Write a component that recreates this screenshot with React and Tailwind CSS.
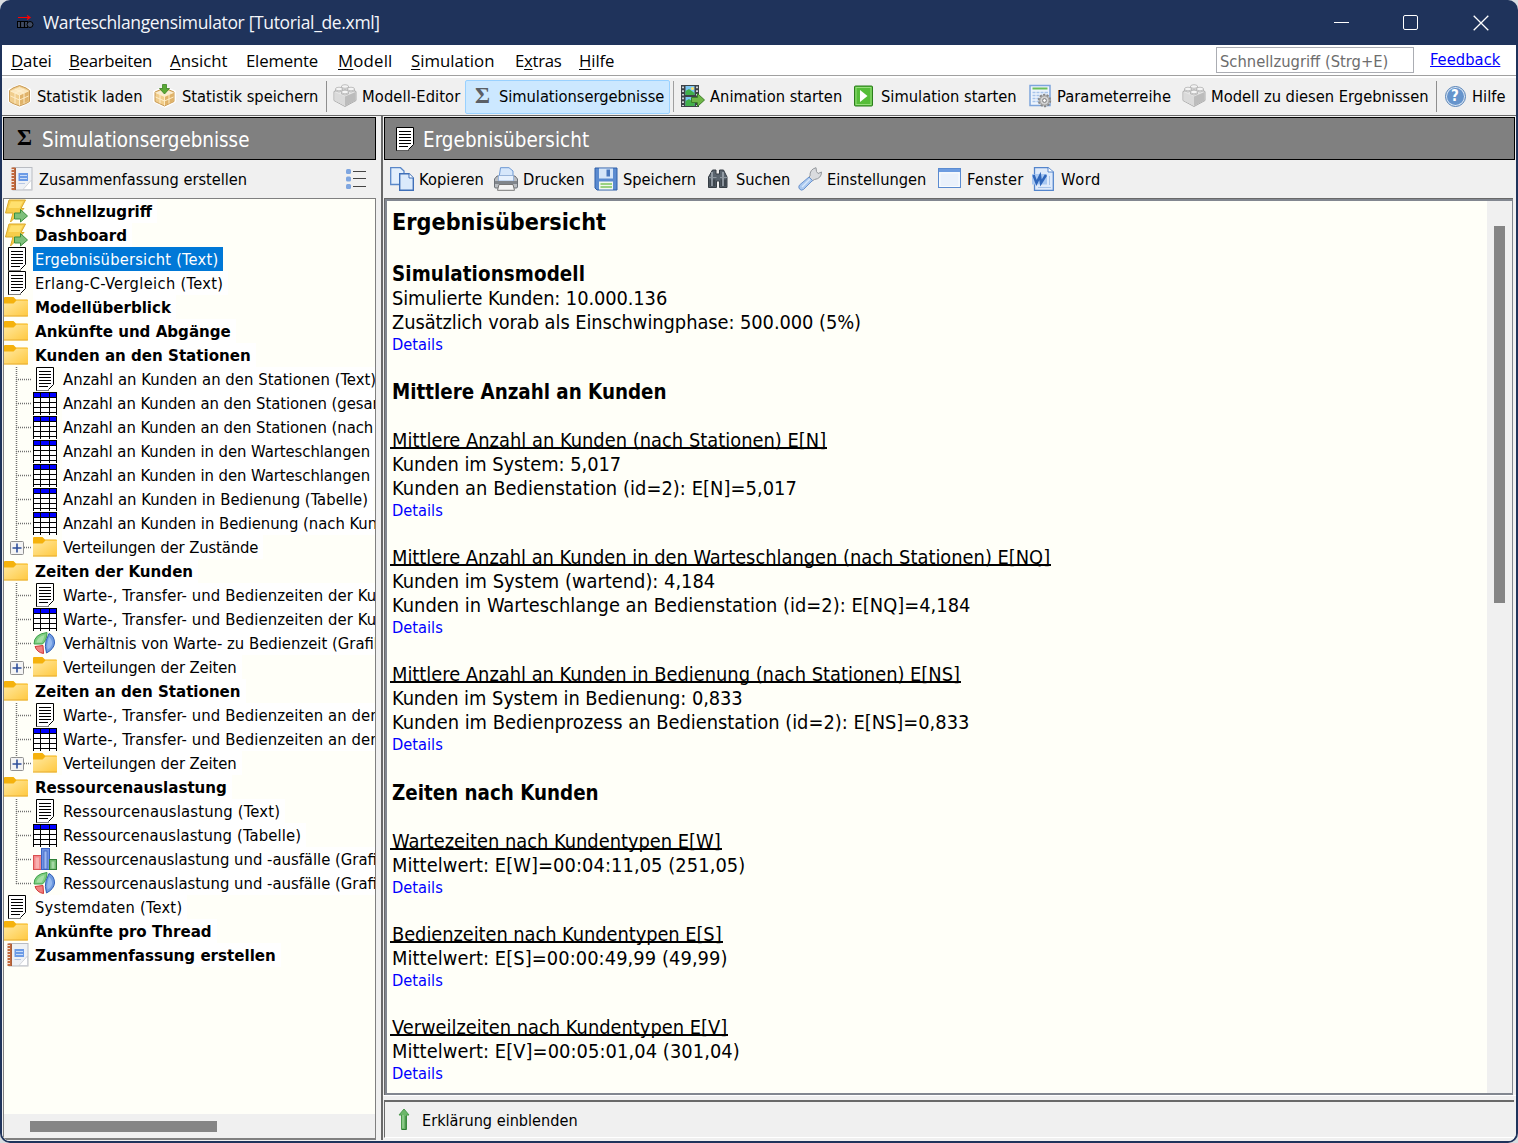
import React from "react";

/* ---------- icons ---------- */

const Svg = ({ children, w = 24, h = 24, className = "" }) => (
  <svg width={w} height={h} viewBox={`0 0 ${w} ${h}`} className={`shrink-0 ${className}`}>
    {children}
  </svg>
);

const DocIcon = ({ className }) => (
  <Svg w={18} h={24} className={className}>
    <path d="M0.5 23V0.5H17.5V17.5L12 23.5H0.5Z" fill="#fff" />
    <path d="M0.5 23.5V0.5H17.5V17.5L12.5 22.5" fill="none" stroke="#000" />
    <path d="M3 4.5H15M3 7.5H15M3 10.5H15M3 13.5H15M3 16.5H15M3 19.5H12" stroke="#000" />
    <path d="M0 23.5H13" stroke="#000" strokeOpacity="0.5" />
  </Svg>
);

const TableIcon = () => (
  <Svg>
    <rect x="0" y="1" width="24" height="23" fill="#fff" />
    <rect x="0" y="1" width="24" height="5" fill="#0000ff" />
    <path d="M0 1.5H24M0 6.5H24M0 11.5H24M0 16.5H24M0 21.5H24M0.5 1V24M7.5 1V24M16.5 1V24M23.5 1V24" stroke="#000" />
  </Svg>
);

const FolderIcon = () => (
  <Svg>
    <defs>
      <linearGradient id="folder" x1="0" y1="0" x2="1" y2="1">
        <stop offset="0" stopColor="#ffe9a2" />
        <stop offset="1" stopColor="#ffc83d" />
      </linearGradient>
    </defs>
    <path d="M0 3Q0 2 1 2H9.5L12 4.5H23Q24 4.5 24 5.5V9H0Z" fill="#f5b20d" />
    <path d="M0 8.5H9.5L12.5 5.5H24V20.5Q24 21.5 23 21.5H0Z" fill="url(#folder)" />
    <path d="M0 21H24" stroke="#e0a52a" strokeWidth="0.8" />
  </Svg>
);

const BoltIcon = () => (
  <Svg>
    <path d="M5 1H21.5L17 9.5H20L6.5 23L9 14H1.5Z" fill="#f7cd4a" stroke="#dba92a" />
    <path d="M7 2.5H19L15.5 9H4.5Z" fill="#ffe06e" />
    <path d="M10.5 14H16.5V10.5L23.5 17L16.5 23V20H10.5Z" fill="#7fc07a" stroke="#3c8f3c" />
  </Svg>
);

const PieIcon = () => (
  <Svg>
    <path d="M1 13Q1 3 14 1.5Q14 9 9.5 13Z" fill="#7fce80" stroke="#3d9f4a" />
    <path d="M3.5 11.5Q4 6 11.5 4Q11 8 8.5 11.5Z" fill="#a5dfa5" />
    <path d="M16 2.5Q21.5 5 21.5 12Q21 18 13.5 22Q11.500 15 13 10Z" fill="#6f9be0" stroke="#2f5fb8" />
    <path d="M16 6Q19.5 9 19 13Q18 17 14.5 18.5Q13.5 14 15 10Z" fill="#95b9ee" />
    <path d="M2 15.5L10 14.5L10.500 22.5Q4 21.5 2 15.5Z" fill="#f08080" stroke="#cf3535" />
  </Svg>
);

const BarsIcon = () => (
  <Svg>
    <rect x="0.5" y="8.5" width="8" height="14" fill="#f4888a" stroke="#d85050" />
    <rect x="2.5" y="10.5" width="3.5" height="11" fill="#f8b0b0" />
    <rect x="8.5" y="1.5" width="8" height="21" fill="#6f92e4" stroke="#3a62c4" />
    <rect x="11" y="4" width="3" height="18" fill="#9db8f2" stroke="#2f55b5" strokeWidth="0.6" />
    <rect x="16.5" y="12.5" width="7" height="10" fill="#6fb96f" stroke="#2f7f35" />
    <rect x="18.5" y="14.5" width="3" height="7" fill="#a5d9a5" />
  </Svg>
);

const NotebookIcon = ({ className }) => (
  <Svg className={className}>
    <rect x="3" y="0.5" width="19" height="22.5" fill="#eef1f5" stroke="#b9bcc2" />
    <path d="M21.500 13L13 22.5H21.500Z" fill="#fff" stroke="#c3c6cc" strokeWidth="0.7" />
    <rect x="1.5" y="0.5" width="4" height="22.5" fill="#c2693c" />
    <path d="M0.500 2.5H4M0.500 5.500H4M0.500 8.500H4M0.500 11.500H4M0.500 14.500H4M0.500 17.500H4M0.500 20.500H4" stroke="#f0e2da" strokeWidth="1.100" />
    <path d="M5.500 1V23" stroke="#9c4a22" strokeWidth="0.800" />
    <rect x="8.5" y="6" width="9.500" height="8" fill="#6c9be6" />
    <path d="M10 8.500H17M10 11.500H17" stroke="#c9dcf8" />
    <path d="M8.5 16.500H15" stroke="#b5c6e4" />
  </Svg>
);

const BrickIcon = () => (
  <Svg>
    <path d="M1 7.500L12 2.500L23 7.500V16.500L12 22.500L1 16.500Z" fill="#e6e6e6" stroke="#aaa" />
    <path d="M1.500 8L12 12.500V22L1.500 16.500Z" fill="#dadada" />
    <path d="M22.500 8L12 12.500V22L22.500 16.500Z" fill="#bcbcbc" />
    <g fill="#f4f4f4" stroke="#a9a9a9" strokeWidth="0.7">
      <path d="M8.500 2.500V4.500Q12 6.500 15.500 4.500V2.500Z" />
      <ellipse cx="12" cy="2.500" rx="3.500" ry="1.800" />
      <path d="M2.500 5V7Q6 9 9.500 7V5Z" />
      <ellipse cx="6" cy="5" rx="3.500" ry="1.800" />
      <path d="M14.500 5V7Q18 9 21.500 7V5Z" />
      <ellipse cx="18" cy="5" rx="3.500" ry="1.800" />
      <path d="M8.500 8V10Q12 12 15.500 10V8Z" />
      <ellipse cx="12" cy="8" rx="3.500" ry="1.800" />
    </g>
  </Svg>
);

const CubeBase = () => (
  <>
    <path d="M0 5L12 0L23 5V18L12 24L0 18Z" fill="#fff" />
    <path d="M1.500 6.500L5 4L11.500 1.500L18 4L21.500 6.500V17.500L18 19.500L11.500 22L5 19.500L1.500 17.500Z" fill="#f0cd8c" stroke="#c89a55" />
    <path d="M2.500 7L11.500 3L20.500 7L11.500 11Z" fill="#fbe8c0" />
    <path d="M11.500 11V21L20.500 17V7Z" fill="#e0b36a" />
    <path d="M2.500 7L11.500 11L20.500 7M11.500 11V21.500M7 5L16 9V19.500M16 5L7 9V19.500M2.500 12L11.500 16L20.500 12" fill="none" stroke="#fff0cf" strokeWidth="0.9" />
  </>
);

const CubeIcon = () => (
  <Svg>
    <CubeBase />
  </Svg>
);

const CubeSaveIcon = () => (
  <Svg>
    <path d="M0 7L12 2L23 7V18L12 24L0 18Z" fill="#fff" />
    <path d="M2 8L11.500 4L21 8V17.500L11.500 22L2 17.500Z" fill="#f0cd8c" stroke="#c89a55" />
    <path d="M3 8.500L11.500 5L20 8.500L11.500 12.500Z" fill="#f8ecd2" />
    <path d="M11.500 12.500V21.500L20.500 17.500V8.500Z" fill="#e0b36a" />
    <path d="M2.500 8.500L11.500 12.500L20.500 8.500M11.500 12.500V21.500M7 10.500V19.500M16 10.500V19.500M2.500 13L11.500 17L20.500 13" fill="none" stroke="#fff0cf" strokeWidth="0.9" />
    <path d="M9.500 0.500H13.500V4.500H16.500L11.500 10L6.500 4.500H9.500Z" fill="#5aa935" stroke="#3b8222" strokeWidth="0.8" />
  </Svg>
);

const FilmIcon = () => (
  <Svg>
    <rect x="0" y="1" width="18" height="22" fill="#3d4247" />
    <path d="M2 2.500V22M16 2.500V22" stroke="#e2e6ea" strokeWidth="1.800" strokeDasharray="1.700 2" />
    <rect x="4.500" y="2" width="9" height="9" fill="#7cc7f2" />
    <path d="M4.500 11V7L8 5L13.500 9V11Z" fill="#41b04a" />
    <circle cx="11.500" cy="4.500" r="1.500" fill="#ffe36b" />
    <rect x="4.500" y="13" width="9" height="9" fill="#7cc7f2" />
    <path d="M4.500 22V17L8 15L13.500 19V22Z" fill="#41b04a" />
    <path d="M10.500 13.500H16.500V9.500L23.500 16L16.500 22.500V18.500H10.500Z" fill="#6fb648" stroke="#3b7f27" />
  </Svg>
);

const PlayIcon = () => (
  <Svg>
    <rect x="2.500" y="2" width="18" height="20" rx="1" fill="#55bd38" stroke="#2b7d1c" />
    <rect x="4" y="3.500" width="15" height="17" fill="none" stroke="#96de7c" />
    <path d="M8 6V18L15.500 12Z" fill="#fff" />
  </Svg>
);

const ParamIcon = () => (
  <Svg>
    <rect x="2" y="1.500" width="20" height="20" fill="#eef4fc" stroke="#7da5dc" strokeWidth="1.500" />
    <rect x="4.500" y="3.500" width="15" height="2" fill="#6bbf59" />
    <path d="M4.500 8.500H20M4.500 11.500H20M4.500 14.500H14M4.500 17.500H12" stroke="#a8c4ea" strokeWidth="1.500" />
    <path d="M8 7V19M12 7V19M16 7V12" stroke="#eef4fc" />
    <circle cx="16.500" cy="16.500" r="5.800" fill="#c9c9c9" stroke="#888" strokeDasharray="2.200 1.400" strokeWidth="1.800" />
    <circle cx="16.500" cy="16.500" r="4.600" fill="#d2d2d2" stroke="#888" strokeWidth="0.700" />
    <circle cx="16.500" cy="16.500" r="1.900" fill="#fff" stroke="#777" />
  </Svg>
);

const HelpIcon = () => (
  <div className="flex size-6 shrink-0 items-center justify-center">
    <div className="flex size-[21px] items-center justify-center rounded-full border border-[#5682b6] bg-[#d5e3f4]">
      <div className="flex size-[17px] items-center justify-center rounded-full bg-[#6694cc] text-[15px] leading-none font-bold text-white">?</div>
    </div>
  </div>
);

const CopyIcon = () => (
  <Svg>
    <path d="M0.700 0.700H10.500L14 4V17.500H0.700Z" fill="#e3effc" stroke="#5a87c8" strokeWidth="1.300" />
    <path d="M9.700 6.700H19L23.300 11V23.300H9.700Z" fill="#dbeafb" stroke="#3f6fb8" strokeWidth="1.400" />
    <path d="M19 6.700V11H23.300" fill="#fff" stroke="#3f6fb8" />
  </Svg>
);

const PrinterIcon = () => (
  <Svg>
    <path d="M5 11L6.500 0.700H15L19 4V11Z" fill="#d6e7fb" stroke="#6b97d3" />
    <path d="M3 9H21L23.500 12V20Q23.500 21 22 21H2Q0.500 21 0.500 20V12Z" fill="#b9bdc2" stroke="#6d7278" />
    <path d="M4.500 8.500H19.500V14H4.500Z" fill="#e7f1fd" stroke="#85a8d8" strokeWidth="0.700" />
    <rect x="1" y="14" width="22" height="3" fill="#80858b" />
    <path d="M5 17.500H19L20.500 23.300H3.500Z" fill="#f4f4f4" stroke="#777" />
  </Svg>
);

const SaveIcon = () => (
  <Svg>
    <path d="M1 1H23V23H3L1 21Z" fill="#5b8bd0" stroke="#2f5fa8" />
    <rect x="5" y="1.500" width="14" height="10" fill="#d5e5f8" />
    <rect x="12.500" y="2.500" width="3.500" height="7" fill="#4a78bd" />
    <rect x="5" y="14.500" width="14" height="8" fill="#f1f8ee" />
    <path d="M6.500 17H18M6.500 20H18" stroke="#7cc35f" strokeWidth="1.500" />
  </Svg>
);

const BinocularsIcon = () => (
  <Svg>
    <path d="M5.500 3H9V7H12.500V3H16.500L20 10V20.500H12.500V14H9.500V20.500H1.500V10Z" fill="#5a646e" stroke="#363d44" />
    <rect x="2.500" y="12.500" width="6" height="7" fill="#3e464e" />
    <rect x="13.500" y="12.500" width="6" height="7" fill="#3e464e" />
    <path d="M5 5V19M16 5V19" stroke="#a4adb6" strokeWidth="1.500" />
    <path d="M2 10.500H9.500M13 10.500H20" stroke="#8d969e" />
  </Svg>
);

const WrenchIcon = () => (
  <Svg>
    <path d="M12 9Q11.500 2.500 18 0.700L18.500 4.500L20 6.500L23.500 5Q23.500 11.500 16.500 12.500L14 14L10.500 10.500Z" fill="#d9dbde" stroke="#92969b" />
    <path d="M11 10L14.500 13.500L5.500 22.500Q3 24 1.500 22Q0 20 1.500 18Z" fill="#a9c8f0" stroke="#6c93cc" />
    <path d="M4 20L12 12" stroke="#d8e7fa" strokeWidth="1.500" />
  </Svg>
);

const WindowIcon = () => (
  <Svg>
    <rect x="0.500" y="1.500" width="22" height="19" fill="#eef4fc" stroke="#5b8bd0" />
    <rect x="1" y="2" width="21" height="3" fill="#6d9ce0" />
    <rect x="2" y="6" width="19" height="13.500" fill="#eaf1fb" stroke="#fff" strokeWidth="0.700" />
  </Svg>
);

const WordIcon = () => (
  <Svg>
    <path d="M2.500 0.700H16L21.300 5V23.300H2.500Z" fill="#dfeafa" stroke="#5485cc" strokeWidth="1.300" />
    <path d="M16 0.700V5H21.300" fill="#fff" stroke="#5485cc" />
    <rect x="0" y="7" width="15" height="10.500" fill="#a9c8f2" />
    <path d="M1.500 8L4.500 16L8 9L9 16L14 8" fill="none" stroke="#2f66bb" strokeWidth="2.500" />
    <path d="M6 20.500H19M17.500 9V18" stroke="#a9c4ea" />
  </Svg>
);

const ListIcon = () => (
  <Svg w={20} h={20}>
    <g fill="#7fa6e0">
      <rect x="0" y="0" width="5" height="5" rx="1.500" />
      <rect x="0" y="7.500" width="5" height="5" rx="1.500" />
      <rect x="0" y="15" width="5" height="5" rx="1.500" />
    </g>
    <path d="M7 2.500H20M7 9.500H20M7 17.500H20" stroke="#444" strokeWidth="1.200" />
  </Svg>
);

const UpIcon = () => (
  <Svg w={12} h={23}>
    <path d="M6 1L11 7H8.500V21.500H3.500V7H1Z" fill="#6cb66a" stroke="#4a994c" />
    <path d="M5 7V20" stroke="#a7d9a3" />
    <path d="M8 8V21.500H4" fill="none" stroke="#2e7a34" />
  </Svg>
);

const AppIcon = () => (
  <Svg w={17} h={16}>
    <path d="M1 2.500H13M10 0.500L13 2.500L10 4.500" fill="none" stroke="#f00" strokeWidth="1.200" />
    <rect x="0.500" y="6.500" width="10" height="6" fill="#3f4b63" stroke="#000" />
    <path d="M3.500 6V13M7.500 6V13" stroke="#000" strokeWidth="1.200" />
    <circle cx="13" cy="9.500" r="3" fill="#3f4b63" stroke="#000" />
  </Svg>
);

/* ---------- toolbars ---------- */

const Tool = ({ icon, label, className = "" }) => (
  <div className={`flex shrink-0 items-center gap-[5px] whitespace-nowrap ${className}`}>
    {icon}
    <span className="pt-[2px]">{label}</span>
  </div>
);

const MainToolbar = () => (
  <div className="flex h-[37px] shrink-0 items-center bg-[#f0f0f0] pl-1.5 text-[16.35px]">
    <Tool icon={<CubeIcon />} label="Statistik laden" className="w-[145px]" />
    <Tool icon={<CubeSaveIcon />} label="Statistik speichern" className="w-[173px]" />
    <div className="h-[31px] w-[7px] shrink-0 border-l border-[#8e8e8e]" />
    <Tool icon={<BrickIcon />} label="Modell-Editor" className="w-[132px] tracking-[0.1px]" />
    <div className="flex h-[34px] w-[205px] shrink-0 items-center rounded-xs border border-[#99d1ff] bg-[#cce8ff] pl-1">
      <span className="w-[29px] pb-[2px] pl-[5px] font-['Liberation_Serif'] text-[23px] leading-none font-bold text-[#5b5f65]">Σ</span>
      <span className="pt-[2px] tracking-[-0.05px] whitespace-nowrap">Simulationsergebnisse</span>
    </div>
    <div className="ml-[3px] h-[31px] w-[8px] shrink-0 border-l border-[#a0a0a0]" />
    <Tool icon={<FilmIcon />} label="Animation starten" className="w-[171px]" />
    <Tool icon={<PlayIcon />} label="Simulation starten" className="w-[176px]" />
    <Tool icon={<ParamIcon />} label="Parameterreihe" className="w-[154px] tracking-[0.05px]" />
    <Tool icon={<BrickIcon />} label="Modell zu diesen Ergebnissen" className="w-[254px]" />
    <div className="h-[31px] w-[7px] shrink-0 border-l border-[#8e8e8e]" />
    <Tool icon={<HelpIcon />} label="Hilfe" />
  </div>
);

const MenuItem = ({ pre = "", hot = "", rest, className }) => (
  <div className={`shrink-0 pt-[2px] ${className}`}>
    {pre}
    <span className="underline decoration-1 underline-offset-2">{hot}</span>
    {rest}
  </div>
);

const MenuBar = () => (
  <div className="flex h-[31px] shrink-0 items-center border-b border-[#a0a0a0] bg-white pl-[9px] font-['Open_Sans'] text-[16.8px] tracking-[-0.1px]">
    <MenuItem hot="D" rest="atei" className="w-[58px]" />
    <MenuItem hot="B" rest="earbeiten" className="w-[101px] tracking-[-0.3px]" />
    <MenuItem hot="A" rest="nsicht" className="w-[76px] tracking-[0px]" />
    <MenuItem rest="Elemente" className="w-[92px] tracking-[-0.2px]" />
    <MenuItem hot="M" rest="odell" className="w-[73px] tracking-[0.2px]" />
    <MenuItem hot="S" rest="imulation" className="w-[104px] tracking-[0px]" />
    <MenuItem pre="E" hot="x" rest="tras" className="w-[64px] tracking-[-0.3px]" />
    <MenuItem hot="H" rest="ilfe" className="w-[60px]" />
    <div className="mr-4 ml-auto flex h-[26px] w-[198px] items-center border border-[#abadb3] pt-[4px] pl-[3px] font-['DejaVu_Sans_Condensed'] text-[16.4px] tracking-normal text-[#6d6d6d]">
      Schnellzugriff (Strg+E)
    </div>
    <div className="mr-4 w-[70px] font-['DejaVu_Sans_Condensed'] text-[16.35px] tracking-[0.05px] text-[#0000ff] underline decoration-1 underline-offset-1">
      Feedback
    </div>
  </div>
);

const TitleBar = () => (
  <div className="flex h-[45px] shrink-0 items-center pl-[15px] font-['Open_Sans'] text-[17.5px] tracking-[-0.34px] text-[#f4f6fa]">
    <AppIcon />
    <span className="ml-[9px] whitespace-nowrap">Warteschlangensimulator [Tutorial_de.xml]</span>
    <div className="mr-[27px] ml-auto flex items-center">
      <div className="h-px w-[15px] bg-white" />
      <div className="ml-[54px] size-[15px] rounded-[2px] border-[1.5px] border-white" />
      <svg width="16" height="16" viewBox="0 0 16 16" className="ml-[55px]">
        <path d="M0.700 0.700L15.300 15.300M15.300 0.700L0.700 15.300" stroke="#fff" strokeWidth="1.300" />
      </svg>
    </div>
  </div>
);

/* ---------- tree ---------- */

const ICONS = { folder: FolderIcon, bolt: BoltIcon, table: TableIcon, pie: PieIcon, bars: BarsIcon };

const TREE = [
  { icon: "bolt", text: "Schnellzugriff", bold: true },
  { icon: "bolt", text: "Dashboard", bold: true },
  { icon: "doc", text: "Ergebnisübersicht (Text)", selected: true, track: "tracking-[0.25px]" },
  { icon: "doc", text: "Erlang-C-Vergleich (Text)", track: "tracking-[0.36px]" },
  { icon: "folder", text: "Modellüberblick", bold: true },
  { icon: "folder", text: "Ankünfte und Abgänge", bold: true },
  { icon: "folder", text: "Kunden an den Stationen", bold: true },
  { sub: true, icon: "doc", text: "Anzahl an Kunden an den Stationen (Text)", track: "tracking-[0.04px]" },
  { sub: true, icon: "table", text: "Anzahl an Kunden an den Stationen (gesamt)", track: "tracking-[-0.05px]" },
  { sub: true, icon: "table", text: "Anzahl an Kunden an den Stationen (nach Kundentypen)", track: "tracking-[-0.05px]" },
  { sub: true, icon: "table", text: "Anzahl an Kunden in den Warteschlangen (Tabelle)", track: "tracking-[-0.05px]" },
  { sub: true, icon: "table", text: "Anzahl an Kunden in den Warteschlangen (nach Kundentypen)", track: "tracking-[-0.05px]" },
  { sub: true, icon: "table", text: "Anzahl an Kunden in Bedienung (Tabelle)", track: "tracking-[0.03px]" },
  { sub: true, icon: "table", text: "Anzahl an Kunden in Bedienung (nach Kundentypen)", track: "tracking-[-0.03px]" },
  { sub: true, plus: true, last: true, icon: "folder", text: "Verteilungen der Zustände", track: "tracking-[-0.12px]" },
  { icon: "folder", text: "Zeiten der Kunden", bold: true },
  { sub: true, icon: "doc", text: "Warte-, Transfer- und Bedienzeiten der Kunden (Text)", track: "tracking-[0.1px]" },
  { sub: true, icon: "table", text: "Warte-, Transfer- und Bedienzeiten der Kunden (Tabelle)", track: "tracking-[0.1px]" },
  { sub: true, icon: "pie", text: "Verhältnis von Warte- zu Bedienzeit (Grafik)" },
  { sub: true, plus: true, last: true, icon: "folder", text: "Verteilungen der Zeiten", track: "tracking-[-0.1px]" },
  { icon: "folder", text: "Zeiten an den Stationen", bold: true },
  { sub: true, icon: "doc", text: "Warte-, Transfer- und Bedienzeiten an den Stationen (Text)", track: "tracking-[0.1px]" },
  { sub: true, icon: "table", text: "Warte-, Transfer- und Bedienzeiten an den Stationen (Tabelle)", track: "tracking-[0.1px]" },
  { sub: true, plus: true, last: true, icon: "folder", text: "Verteilungen der Zeiten", track: "tracking-[-0.1px]" },
  { icon: "folder", text: "Ressourcenauslastung", bold: true },
  { sub: true, icon: "doc", text: "Ressourcenauslastung (Text)", track: "tracking-[0.18px]" },
  { sub: true, icon: "table", text: "Ressourcenauslastung (Tabelle)", track: "tracking-[0.14px]" },
  { sub: true, icon: "bars", text: "Ressourcenauslastung und -ausfälle (Grafik)" },
  { sub: true, last: true, icon: "pie", text: "Ressourcenauslastung und -ausfälle (Grafik)" },
  { icon: "doc", text: "Systemdaten (Text)", track: "tracking-[0.28px]" },
  { icon: "folder", text: "Ankünfte pro Thread", bold: true },
  { icon: "book", text: "Zusammenfassung erstellen", bold: true },
];

const Branch = ({ plus, last }) => (
  <svg width="29" height="24" viewBox="0 0 29 24" className="shrink-0">
    <path d={last ? "M12.500 0V13" : "M12.500 0V24"} stroke="#707070" strokeWidth="1.500" strokeDasharray="1 1" />
    <path d="M12 12.500H27" stroke="#707070" strokeWidth="1.500" strokeDasharray="1 1" />
    {plus && (
      <>
        <rect x="6.500" y="6.500" width="13" height="13" rx="1" fill="#f4f4f4" stroke="#919191" />
        <path d="M8.500 13H17.500M13 8.500V17.500" stroke="#2f4f9b" strokeWidth="1.600" />
      </>
    )}
  </svg>
);

const RowIcon = ({ icon, sub }) => {
  if (icon === "doc") return <DocIcon className={sub ? "ml-[3px]" : "ml-1"} />;
  if (icon === "book") return <NotebookIcon className="ml-[2px]" />;
  const Icon = ICONS[icon];
  return <Icon />;
};

const TreeRow = ({ icon, text, bold, selected, sub, plus, last, track = "" }) => (
  <div className="flex h-6 shrink-0 items-center">
    {sub && <Branch plus={plus} last={last} />}
    <div className="w-[29px] shrink-0">
      <RowIcon icon={icon} sub={sub} />
    </div>
    <span
      className={`h-6 shrink-0 pr-[5px] leading-[26px] whitespace-pre ${sub ? "pl-px" : "pl-[2px]"} ${track} ${
        selected ? "bg-[#0078d7] text-white" : "bg-white"
      } ${
        bold
          ? "font-['DejaVu_Sans'] text-[15.08px] font-bold"
          : sub
            ? "text-[16.5px]"
            : "text-[16.3px]"
      }`}
    >
      {text}
    </span>
  </div>
);

const LeftPanel = () => (
  <div className="mt-px ml-px flex w-[373px] shrink-0 flex-col">
    <div className="flex h-[43px] shrink-0 items-center border border-black bg-[#808080] text-[20.4px] text-white">
      <span className="ml-[13px] w-[25px] pb-[3px] font-['Liberation_Serif'] text-[23px] leading-none font-bold text-black">Σ</span>
      <span className="pt-[3px]">Simulationsergebnisse</span>
    </div>
    <div className="flex h-[38px] shrink-0 items-center pr-[10px] pl-[7px] text-[16.25px]">
      <Tool icon={<NotebookIcon />} label="Zusammenfassung erstellen" />
      <div className="ml-auto">
        <ListIcon />
      </div>
    </div>
    <div className="flex min-h-0 flex-1 flex-col overflow-hidden border border-b-2 border-[#808080] bg-[#fffff8]">
      {TREE.map((row, i) => (
        <TreeRow key={i} {...row} />
      ))}
      <div className="mt-auto flex h-6 shrink-0 items-center bg-[#f0f0f0] pl-[26px]">
        <div className="h-[11px] w-[187px] bg-[#858585]" />
      </div>
    </div>
  </div>
);

/* ---------- report ---------- */

const REPORT = [
  ["h2", "Simulationsmodell", "tracking-[0.1px]"],
  ["p", "Simulierte Kunden: 10.000.136", "tracking-[-0.09px]"],
  ["p", "Zusätzlich vorab als Einschwingphase: 500.000 (5%)", "tracking-[-0.06px]"],
  ["a", "Details"],
  ["h2", "Mittlere Anzahl an Kunden"],
  ["h3", "Mittlere Anzahl an Kunden (nach Stationen) E[N]", "tracking-[0.02px]"],
  ["p", "Kunden im System: 5,017", "tracking-[-0.04px]"],
  ["p", "Kunden an Bedienstation (id=2): E[N]=5,017", "tracking-[0.06px]"],
  ["a", "Details"],
  ["h3b", "Mittlere Anzahl an Kunden in den Warteschlangen (nach Stationen) E[NQ]"],
  ["p", "Kunden im System (wartend): 4,184"],
  ["p", "Kunden in Warteschlange an Bedienstation (id=2): E[NQ]=4,184", "tracking-[0.03px]"],
  ["a", "Details"],
  ["h3b", "Mittlere Anzahl an Kunden in Bedienung (nach Stationen) E[NS]"],
  ["p", "Kunden im System in Bedienung: 0,833", "tracking-[-0.08px]"],
  ["p", "Kunden im Bedienprozess an Bedienstation (id=2): E[NS]=0,833"],
  ["a", "Details"],
  ["h2b", "Zeiten nach Kunden"],
  ["h3", "Wartezeiten nach Kundentypen E[W]"],
  ["p", "Mittelwert: E[W]=00:04:11,05 (251,05)", "tracking-[0.08px]"],
  ["a", "Details"],
  ["h3b", "Bedienzeiten nach Kundentypen E[S]", "tracking-[-0.06px]"],
  ["p", "Mittelwert: E[S]=00:00:49,99 (49,99)", "tracking-[0.08px]"],
  ["a", "Details"],
  ["h3b", "Verweilzeiten nach Kundentypen E[V]"],
  ["p", "Mittelwert: E[V]=00:05:01,04 (301,04)", "tracking-[0.08px]"],
  ["a", "Details"],
];

const LINE = {
  h2: "mt-6 h-[26px] leading-[26px] text-[20.35px] font-bold",
  h2b: "mt-[25px] h-[26px] leading-[26px] text-[20.35px] font-bold",
  h3: "mt-6 h-6 leading-6 text-[19.85px]",
  h3b: "mt-[25px] h-6 leading-6 text-[19.85px]",
  p: "h-6 leading-6 text-[19.85px]",
  a: "h-5 leading-5 text-[16.3px] text-[#0000ff]",
};

const Underlined = ({ children }) => (
  <span className="relative inline-block after:absolute after:-right-px after:bottom-[4px] after:-left-[2px] after:h-[2px] after:bg-black">
    {children}
  </span>
);

const Report = () => (
  <div className="flex min-h-0 flex-1 border-t border-l border-[#696969]">
    <div className="flex min-w-0 flex-1 border-2 border-r border-[#828790] bg-[#fffff8]">
      <div className="min-w-0 flex-1 overflow-hidden pt-[5px] pl-[5px] whitespace-nowrap">
        <div className="h-[31px] text-[23.2px] leading-[31px] font-bold">Ergebnisübersicht</div>
        {REPORT.map(([kind, text, track = ""], i) => (
          <div key={i} className={`${LINE[kind]} ${track}`}>
            {kind.startsWith("h3") ? <Underlined>{text}</Underlined> : text}
          </div>
        ))}
      </div>
      <div className="w-[25px] shrink-0 bg-[#f0f0f0] pt-[25px] pl-[7px]">
        <div className="h-[377px] w-[11px] bg-[#858585]" />
      </div>
    </div>
  </div>
);

const RightPanel = () => (
  <div className="ml-[5px] flex min-w-0 flex-1 flex-col border-l-2 border-[#696969]">
    <div className="mt-px mr-px ml-px flex h-[43px] shrink-0 items-center border border-black bg-[#808080] pl-[11px] text-[20.4px] text-white">
      <DocIcon />
      <span className="ml-[9px] pt-[3px] tracking-[0.05px]">Ergebnisübersicht</span>
    </div>
    <div className="flex h-[38px] shrink-0 items-center pl-[7px] text-[16.3px]">
      <Tool icon={<CopyIcon />} label="Kopieren" className="w-[104px] tracking-[0.1px]" />
      <Tool icon={<PrinterIcon />} label="Drucken" className="w-[100px] tracking-[0.1px]" />
      <Tool icon={<SaveIcon />} label="Speichern" className="w-[113px]" />
      <Tool icon={<BinocularsIcon />} label="Suchen" className="w-[91px]" />
      <Tool icon={<WrenchIcon />} label="Einstellungen" className="w-[140px]" />
      <Tool icon={<WindowIcon />} label="Fenster" className="w-[94px] tracking-[0.35px]" />
      <Tool icon={<WordIcon />} label="Word" className="tracking-[0.6px]" />
    </div>
    <div className="mr-[3px] ml-px flex h-[897px] flex-col">
      <Report />
    </div>
    <div className="h-[5px] shrink-0 border-t border-white" />
    <div className="mr-[2px] ml-px flex h-[38px] shrink-0 items-center gap-[12px] border-t-2 border-b border-l border-t-[#696969] border-b-white border-l-[#696969] pl-[13px] text-[16.15px]">
      <UpIcon />
      <span className="pt-[3px]">Erklärung einblenden</span>
    </div>
  </div>
);

export default function App() {
  return (
    <div className="h-[1143px] w-[1518px] bg-[#d9dce0]">
      <div className="flex h-full w-full flex-col overflow-hidden rounded-[10px] bg-[#1f335b] px-[2px] pb-[2px] font-['DejaVu_Sans_Condensed','DejaVu_Sans',sans-serif] text-black">
        <TitleBar />
        <div className="flex min-h-0 flex-1 flex-col overflow-hidden rounded-b-[8px] bg-white">
          <MenuBar />
          <div className="h-[2px] shrink-0 bg-white" />
          <MainToolbar />
          <div className="flex min-h-0 flex-1 border-t border-[#696969] bg-[#f0f0f0] pb-px">
            <LeftPanel />
            <RightPanel />
          </div>
        </div>
      </div>
    </div>
  );
}
